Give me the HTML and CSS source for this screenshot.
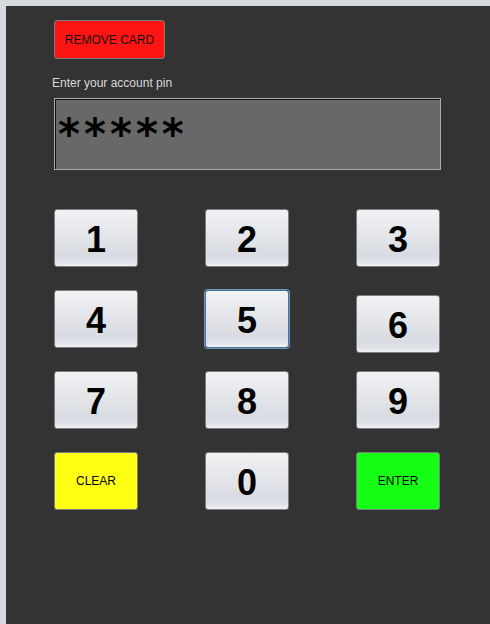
FILE: index.html
```html
<!DOCTYPE html>
<html>
<head>
<meta charset="utf-8">
<link rel="stylesheet" href="styles.css">
</head>
<body>
<div class="panel">
  <button class="btn remove">REMOVE CARD</button>
  <div class="label">Enter your account pin</div>
  <div class="pin"><span class="stars">*****</span></div>
  <div class="keypad">
    <button class="btn key">1</button>
    <button class="btn key">2</button>
    <button class="btn key">3</button>
    <button class="btn key">4</button>
    <button class="btn key focus">5</button>
    <button class="btn key low">6</button>
    <button class="btn key">7</button>
    <button class="btn key">8</button>
    <button class="btn key">9</button>
    <button class="btn action clear">CLEAR</button>
    <button class="btn key">0</button>
    <button class="btn action enter">ENTER</button>
  </div>
</div>
</body>
</html>
```

FILE: styles.css
```css
html, body {
  margin: 0;
  padding: 0;
  background: #d6d9df;
  font-family: "Liberation Sans", Arial, sans-serif;
}
.panel {
  margin: 6px 0 0 6px;
  height: 618px;
  background: #333333;
  padding: 14px 0 0 48px;
  box-sizing: border-box;
}
.btn {
  display: flex;
  align-items: center;
  justify-content: center;
  box-sizing: border-box;
  border: 1px solid #7a7d82;
  border-radius: 3px;
  padding: 0;
  margin: 0;
  font-family: "Liberation Sans", Arial, sans-serif;
  color: #000;
  background: linear-gradient(to bottom, #f1f2f4 0%, #e3e5e9 45%, #d8dbe1 80%, #dfe2e8 92%, #f0f2f6 100%);
}
.remove {
  width: 111px;
  height: 39px;
  background: #ff1414;
  font-size: 12px;
  color: #111;
}
.label {
  margin: 17px 0 0 -2px;
  font-size: 12px;
  line-height: 14px;
  color: #d8d8d8;
}
.pin {
  margin-top: 8px;
  width: 387px;
  height: 72px;
  box-sizing: border-box;
  border: 1px solid #a9abaf;
  background: #686868;
  box-shadow: inset 1px 1px 0 #111;
  padding: 9px 0 0 3px;
}
.stars {
  font-family: "DejaVu Sans", sans-serif;
  font-weight: bold;
  font-size: 42px;
  line-height: 54px;
  color: #000;
  letter-spacing: 4px;
}
.keypad {
  margin-top: 39px;
  display: grid;
  grid-template-columns: repeat(3, 84px);
  grid-auto-rows: 58px;
  column-gap: 67px;
  row-gap: 23px;
  align-items: start;
}
.key {
  width: 84px;
  height: 58px;
  font-size: 36px;
  font-weight: bold;
  padding-top: 3px;
}
.focus {
  border: 1px solid #4f6f96;
  box-shadow: 0 0 0 1px #7196c0;
}
.low {
  margin-top: 5px;
}
.action {
  width: 84px;
  height: 58px;
  font-size: 12px;
}
.clear {
  background: #ffff14;
}
.enter {
  background: #14ff14;
}
```
